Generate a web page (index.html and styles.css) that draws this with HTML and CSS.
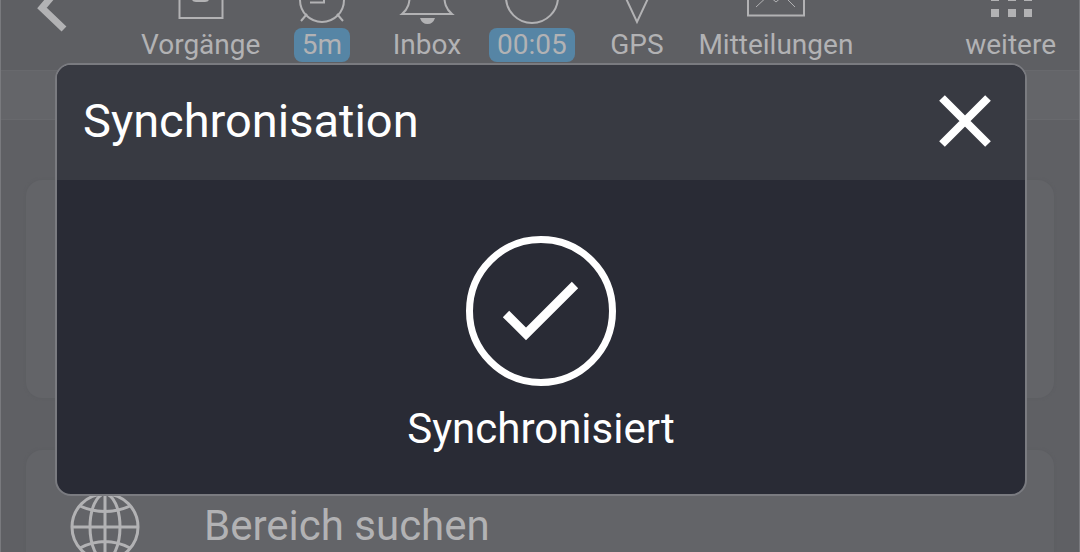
FILE: index.html
```html
<!DOCTYPE html>
<html lang="de">

<head>
    <meta charset="UTF-8">
    <meta name="viewport" content="width=device-width, initial-scale=1.0">
    <title>Synchronisation</title>
    <link rel="stylesheet" href="styles.css">
</head>

<body>
    <div class="app">
        <header class="toolbar">
            <button class="back-btn" aria-label="Zurück">
                <svg width="36" height="36" viewBox="0 0 36 36">
                    <path d="M30 -18 L8 8 L30 29" />
                </svg>
            </button>

            <nav class="tools">
                <button class="tool">
                    <svg width="60" height="28" viewBox="0 0 60 28">
                        <path d="M8.500 -20 V18 H51.500 V-20" />
                        <path class="solid" d="M21 -4 H38 V0 Q37 2 34 2 H25 Q22 2 21 0 Z" />
                    </svg>
                    <span class="label">Vorgänge</span>
                </button>
                <button class="tool">
                    <svg width="60" height="28" viewBox="0 0 60 28">
                        <circle cx="30" cy="0" r="22" />
                        <path d="M18 2.500 H32 V-12 M15 14 L9 21 M45 14 L51 21" />
                    </svg>
                    <span class="label badge">5m</span>
                </button>
                <button class="tool">
                    <svg width="60" height="28" viewBox="0 0 60 28">
                        <path d="M13 -10 C13 4 11 9 5 14 H55 C49 9 47 4 47 -10" />
                        <path class="solid" d="M23 18 H38 Q36 24 30.500 24 Q25 24 23 18 Z" />
                    </svg>
                    <span class="label">Inbox</span>
                </button>
                <button class="tool">
                    <svg width="60" height="28" viewBox="0 0 60 28">
                        <circle cx="30" cy="-3" r="26" />
                    </svg>
                    <span class="label badge">00:05</span>
                </button>
                <button class="tool">
                    <svg width="60" height="28" viewBox="0 0 60 28">
                        <path d="M16 -8 L30 22 L44 -8" />
                    </svg>
                    <span class="label">GPS</span>
                </button>
                <button class="tool">
                    <svg width="60" height="28" viewBox="0 0 60 28">
                        <path d="M2 -20 V15.500 H58 V-20" />
                        <path class="thin" d="M10 7 L24 -6 M49 7 L36 -6 M23 -4 L30 2 L37 -4" />
                    </svg>
                    <span class="label">Mitteilungen</span>
                </button>
                <button class="tool more">
                    <svg width="60" height="28" viewBox="0 0 60 28">
                        <path class="solid" d="M10 -7h8v8h-8z M27 -7h8v8h-8z M43 -7h8v8h-8z M10 9h8v8h-8z M27 9h8v8h-8z M43 9h8v8h-8z" />
                    </svg>
                    <span class="label">weitere</span>
                </button>
            </nav>
        </header>

        <div class="subbar"></div>

        <main class="content">
            <section class="card"></section>
            <button class="card search-card">
                <svg class="globe" width="70" height="70" viewBox="0 0 70 70">
                    <circle cx="35" cy="35" r="33" />
                    <ellipse cx="35" cy="35" rx="15" ry="33" />
                    <path d="M35 2 V68 M2 35 H68 M10 14 Q35 25 60 14 M10 56 Q35 43 60 56" />
                </svg>
                <span>Bereich suchen</span>
            </button>
        </main>
    </div>

    <div class="overlay">
        <div class="dialog" role="dialog" aria-labelledby="dialogTitle">
            <div class="dialog-header">
                <h1 id="dialogTitle">Synchronisation</h1>
                <button class="close-btn" aria-label="Schließen">
                    <svg width="52" height="52" viewBox="0 0 52 52">
                        <path d="M3 3 L49 49 M49 3 L3 49" />
                    </svg>
                </button>
            </div>
            <div class="dialog-body">
                <svg class="check" width="150" height="150" viewBox="0 0 150 150">
                    <circle cx="75" cy="75" r="71.500" />
                    <path d="M40 78 L60 98 L109 49" />
                </svg>
                <p>Synchronisiert</p>
            </div>
        </div>
    </div>
</body>

</html>
```

FILE: styles.css
```css
* {
    margin: 0;
    padding: 0;
    box-sizing: border-box;
}

body {
    font-family: Roboto, sans-serif;
    background-color: #5f6064;
    color: #b2b2b4;
}

button {
    font: inherit;
    color: inherit;
    background: none;
    border: none;
    cursor: pointer;
}

svg {
    display: block;
    fill: none;
    stroke: currentColor;
}

.app {
    height: 100vh;
    overflow: hidden;
    border-left: 1px solid #797a7e;
    border-right: 1px solid #797a7e;
}

/* Toolbar */
.toolbar {
    display: flex;
    align-items: flex-start;
    height: 70px;
    padding: 0 14px 0 33px;
    background-color: #5e5f63;
}

.back-btn {
    width: 98px;
}

.back-btn svg {
    stroke-width: 7;
}

.tools {
    display: flex;
    flex: 1;
}

.tool {
    display: flex;
    flex-direction: column;
    align-items: center;
    min-width: 105px;
    padding: 0 9px;
}

.tool svg {
    stroke-width: 2;
}

.tool .thin {
    stroke-width: 1;
}

.tool .solid {
    fill: currentColor;
    stroke: none;
}

.more {
    margin-left: auto;
}

.label {
    font-size: 28px;
    line-height: 34px;
}

.badge {
    padding: 0 8px;
    border-radius: 8px;
    background-color: #5685a5;
}

.subbar {
    height: 50px;
    background-color: #646569;
    border-top: 1px solid #68696d;
    border-bottom: 1px solid #68696d;
}

/* Page content */
.content {
    display: flex;
    flex-direction: column;
    gap: 52px;
    padding: 60px 25px 0;
}

.card {
    min-height: 218px;
    border-radius: 16px;
    background-color: #636468;
    box-shadow: 0 0 3px #5c5d61;
}

.search-card {
    display: flex;
    align-items: flex-start;
    gap: 64px;
    padding: 42px 44px;
    font-size: 42px;
    line-height: 68px;
    text-align: left;
}

.globe {
    stroke-width: 3;
}

/* Dialog */
.overlay {
    position: fixed;
    inset: 0;
    display: flex;
    align-items: flex-start;
    padding: 63px 53px 0 55px;
}

.dialog {
    flex: 1;
    border: 2px solid #7a7b80;
    border-radius: 16px;
    background-color: #292b35;
    color: #fff;
    overflow: hidden;
}

.dialog-header {
    display: flex;
    justify-content: space-between;
    align-items: center;
    height: 115px;
    padding: 0 34px 4px 26px;
    background-color: #383a42;
}

.dialog-header h1 {
    font-size: 47px;
    font-weight: 400;
}

.close-btn svg {
    stroke-width: 8;
}

.dialog-body {
    display: flex;
    flex-direction: column;
    align-items: center;
    gap: 16px;
    padding: 56px 24px 38px;
}

.check {
    stroke-width: 7;
}

.check path {
    stroke-width: 9;
}

.dialog-body p {
    font-size: 42px;
    line-height: 54px;
}
```
